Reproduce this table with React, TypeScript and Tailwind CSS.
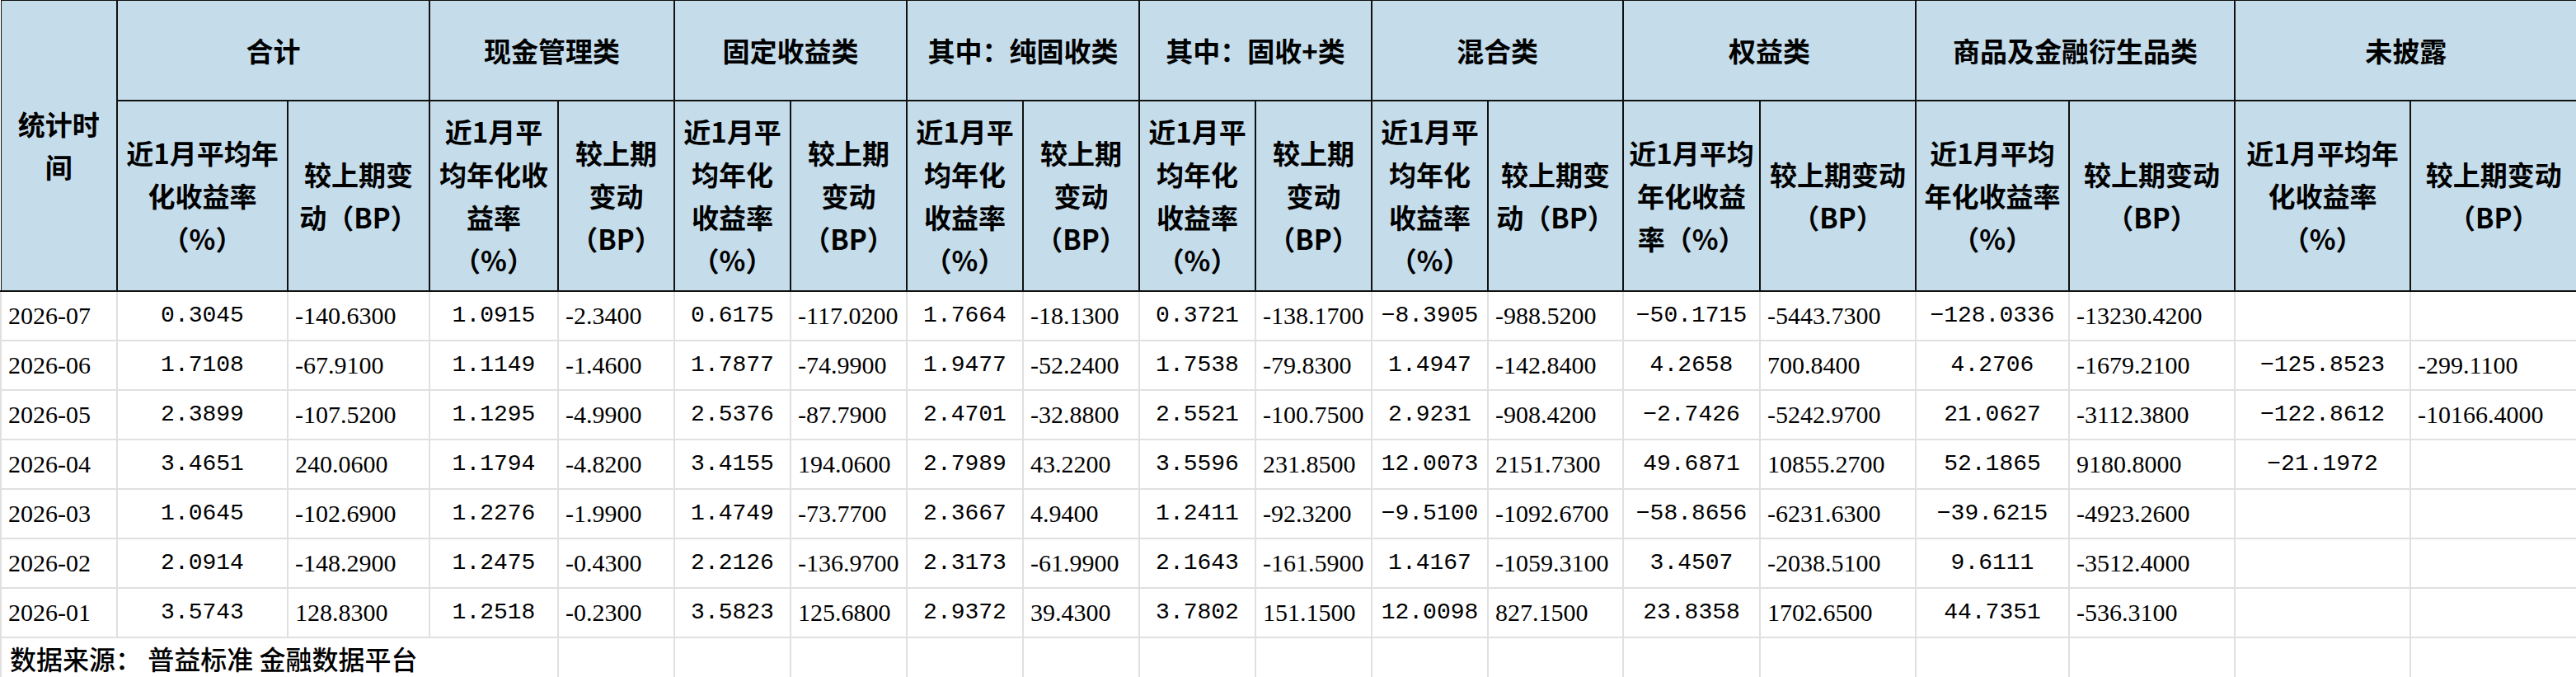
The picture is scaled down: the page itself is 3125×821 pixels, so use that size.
import React from "react";

// column widths, left to right (px)
const COLS = [
  "w-[141px]", "w-[207px]", "w-[172px]", "w-[156px]", "w-[141px]",
  "w-[141px]", "w-[141px]", "w-[141px]", "w-[141px]", "w-[141px]",
  "w-[141px]", "w-[141px]", "w-[164px]", "w-[166px]", "w-[189px]",
  "w-[186px]", "w-[201px]", "w-[213px]", "w-[202px]",
];

const GROUPS = [
  "合计",
  "现金管理类",
  "固定收益类",
  "其中：纯固收类",
  "其中：固收+类",
  "混合类",
  "权益类",
  "商品及金融衍生品类",
  "未披露",
];

// wrapped header text of the second header row, one array per column
const SUB_HEADERS: string[][] = [
  ["近1月平均年", "化收益率", "（%）"],
  ["较上期变", "动（BP）"],
  ["近1月平", "均年化收", "益率", "（%）"],
  ["较上期", "变动", "（BP）"],
  ["近1月平", "均年化", "收益率", "（%）"],
  ["较上期", "变动", "（BP）"],
  ["近1月平", "均年化", "收益率", "（%）"],
  ["较上期", "变动", "（BP）"],
  ["近1月平", "均年化", "收益率", "（%）"],
  ["较上期", "变动", "（BP）"],
  ["近1月平", "均年化", "收益率", "（%）"],
  ["较上期变", "动（BP）"],
  ["近1月平均", "年化收益", "率（%）"],
  ["较上期变动", "（BP）"],
  ["近1月平均", "年化收益率", "（%）"],
  ["较上期变动", "（BP）"],
  ["近1月平均年", "化收益率", "（%）"],
  ["较上期变动", "（BP）"],
];

const ROWS: string[][] = [
  ["2026-07", "0.3045", "-140.6300", "1.0915", "-2.3400", "0.6175", "-117.0200", "1.7664", "-18.1300", "0.3721", "-138.1700", "−8.3905", "-988.5200", "−50.1715", "-5443.7300", "−128.0336", "-13230.4200", "", ""],
  ["2026-06", "1.7108", "-67.9100", "1.1149", "-1.4600", "1.7877", "-74.9900", "1.9477", "-52.2400", "1.7538", "-79.8300", "1.4947", "-142.8400", "4.2658", "700.8400", "4.2706", "-1679.2100", "−125.8523", "-299.1100"],
  ["2026-05", "2.3899", "-107.5200", "1.1295", "-4.9900", "2.5376", "-87.7900", "2.4701", "-32.8800", "2.5521", "-100.7500", "2.9231", "-908.4200", "−2.7426", "-5242.9700", "21.0627", "-3112.3800", "−122.8612", "-10166.4000"],
  ["2026-04", "3.4651", "240.0600", "1.1794", "-4.8200", "3.4155", "194.0600", "2.7989", "43.2200", "3.5596", "231.8500", "12.0073", "2151.7300", "49.6871", "10855.2700", "52.1865", "9180.8000", "−21.1972", ""],
  ["2026-03", "1.0645", "-102.6900", "1.2276", "-1.9900", "1.4749", "-73.7700", "2.3667", "4.9400", "1.2411", "-92.3200", "−9.5100", "-1092.6700", "−58.8656", "-6231.6300", "−39.6215", "-4923.2600", "", ""],
  ["2026-02", "2.0914", "-148.2900", "1.2475", "-0.4300", "2.2126", "-136.9700", "2.3173", "-61.9900", "2.1643", "-161.5900", "1.4167", "-1059.3100", "3.4507", "-2038.5100", "9.6111", "-3512.4000", "", ""],
  ["2026-01", "3.5743", "128.8300", "1.2518", "-0.2300", "3.5823", "125.6800", "2.9372", "39.4300", "3.7802", "151.1500", "12.0098", "827.1500", "23.8358", "1702.6500", "44.7351", "-536.3100", "", ""],
];

const TH =
  "border-2 border-[#111] bg-[#c5dcea] text-center align-middle font-bold text-black text-[33px] leading-[52px] font-['Noto_Sans_CJK_SC',sans-serif]";
const TD = "border-2 border-[#e0e0e0] align-middle text-black whitespace-nowrap overflow-hidden";
const SERIF = "font-['Liberation_Serif',serif] text-[30px] text-left pl-[8px]";
const MONO = "font-['Liberation_Mono',monospace] text-[28px] text-center";

function Lines({ lines }: { lines: string[] }) {
  return (
    <>
      {lines.map((l, i) => (
        <div key={i}>{l}</div>
      ))}
    </>
  );
}

export default function App() {
  return (
    <div className="w-[3125px] h-[821px] overflow-hidden bg-white">
      <table className="table-fixed border-collapse w-[3125px]">
        <colgroup>
          {COLS.map((c, i) => (
            <col key={i} className={c} />
          ))}
        </colgroup>
        <thead>
          <tr className="h-[121px]">
            <th rowSpan={2} className={TH + " border-t-[1px] border-l-[1px]"}>
              <Lines lines={["统计时", "间"]} />
            </th>
            {GROUPS.map((g, i) => (
              <th
                key={g}
                colSpan={2}
                className={TH + " border-t-[1px]" + (i === GROUPS.length - 1 ? " border-r-[1px]" : "")}
              >
                {g}
              </th>
            ))}
          </tr>
          <tr className="h-[231px]">
            {SUB_HEADERS.map((lines, i) => (
              <th key={i} className={TH + (i === SUB_HEADERS.length - 1 ? " border-r-[1px]" : "")}>
                <Lines lines={lines} />
              </th>
            ))}
          </tr>
        </thead>
        <tbody>
          {ROWS.map((row) => (
            <tr key={row[0]} className="h-[60px]">
              {row.map((v, i) => (
                <td key={i} className={TD + " " + (i === 0 || i % 2 === 0 ? SERIF : MONO)}>
                  {v}
                </td>
              ))}
            </tr>
          ))}
          <tr className="h-[49px]">
            <td
              colSpan={4}
              className={TD + " pl-[10px] text-left text-[32px] font-medium font-['Noto_Sans_CJK_SC',sans-serif]"}
            >
              数据来源： 普益标准 金融数据平台
            </td>
            {COLS.slice(4).map((_, i) => (
              <td key={i} className={TD} />
            ))}
          </tr>
        </tbody>
      </table>
    </div>
  );
}
